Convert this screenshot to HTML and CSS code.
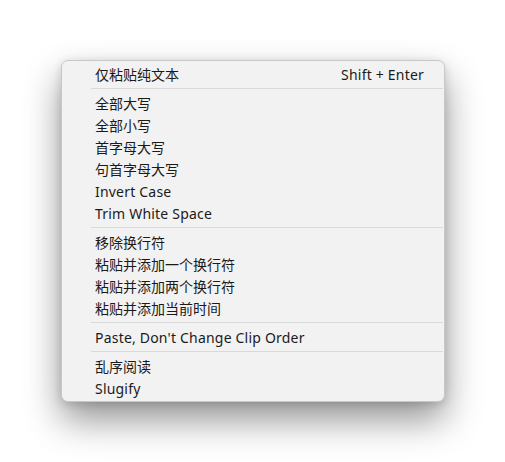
FILE: index.html
```html
<!DOCTYPE html>
<html lang="zh-CN">
<head>
<meta charset="utf-8">
<link rel="stylesheet" href="styles.css">
</head>
<body>
<div class="menu">
  <div class="item"><span class="label">仅粘贴纯文本</span><span class="key">Shift + Enter</span></div>
  <div class="sep"></div>
  <div class="item"><span class="label">全部大写</span></div>
  <div class="item"><span class="label">全部小写</span></div>
  <div class="item"><span class="label">首字母大写</span></div>
  <div class="item"><span class="label">句首字母大写</span></div>
  <div class="item"><span class="label latin">Invert Case</span></div>
  <div class="item"><span class="label latin">Trim White Space</span></div>
  <div class="sep"></div>
  <div class="item"><span class="label">移除换行符</span></div>
  <div class="item"><span class="label">粘贴并添加一个换行符</span></div>
  <div class="item"><span class="label">粘贴并添加两个换行符</span></div>
  <div class="item"><span class="label">粘贴并添加当前时间</span></div>
  <div class="sep"></div>
  <div class="item"><span class="label latin">Paste, Don't Change Clip Order</span></div>
  <div class="sep"></div>
  <div class="item"><span class="label">乱序阅读</span></div>
  <div class="item"><span class="label latin">Slugify</span></div>
</div>
</body>
</html>
```

FILE: styles.css
```css
html, body {
  margin: 0;
  padding: 0;
  background: #ffffff;
}
html {
  height: 100%;
}
body {
  box-sizing: border-box;
  min-height: 100%;
  padding: 60px 0 0 61px;
  font-family: "Noto Sans", "Noto Sans CJK SC", sans-serif;
  font-size: 14px;
  color: #1a1a1a;
}
.menu {
  width: 382px;
  background: #f2f2f2;
  border: 1px solid #c8c8c8;
  border-radius: 7px;
  padding: 2px 0 2px 0;
  box-shadow: 0 18px 36px rgba(0, 0, 0, 0.42), 0 2px 10px rgba(0, 0, 0, 0.14);
}
.item {
  height: 21px;
  padding: 1px 20px 0 33px;
  display: flex;
  align-items: center;
  justify-content: space-between;
  line-height: 21px;
  white-space: nowrap;
}
.latin,
.key {
  letter-spacing: 0.2px;
}
.sep {
  height: 1px;
  background: #d9d9d9;
  margin: 3px 1px 3px 29px;
}
```
